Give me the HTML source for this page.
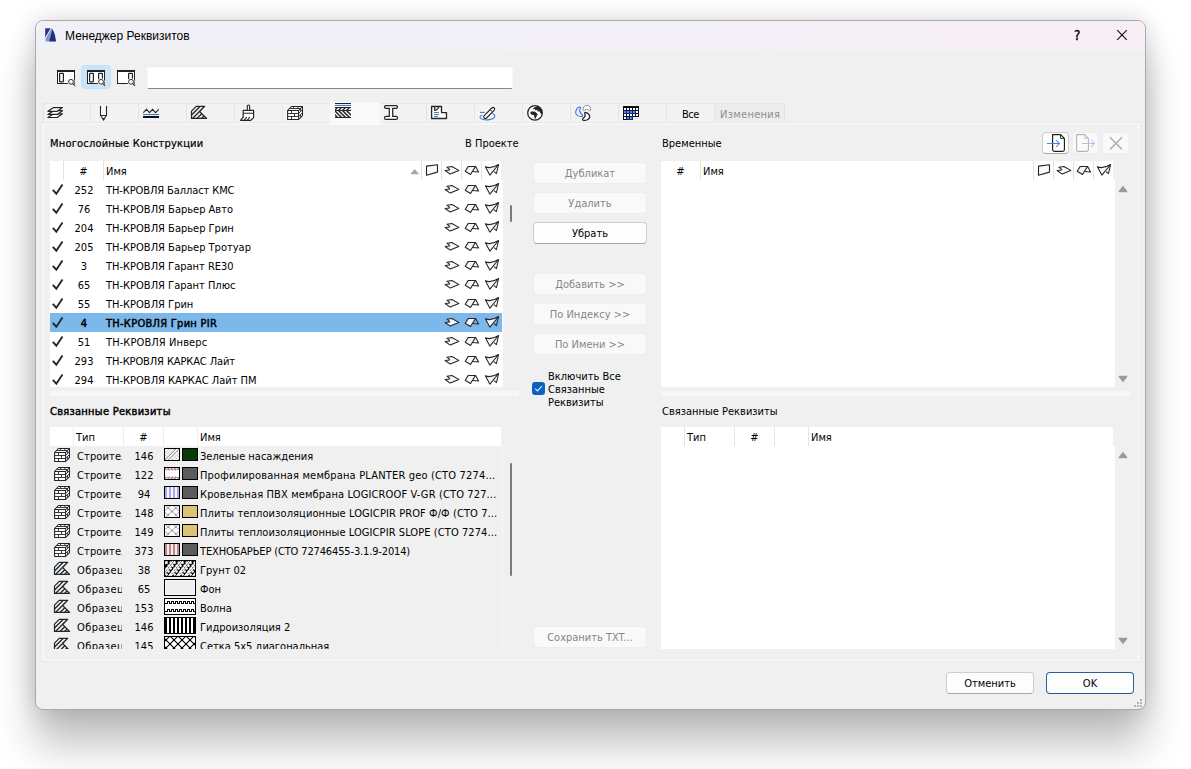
<!DOCTYPE html>
<html lang="ru">
<head>
<meta charset="utf-8">
<title>Менеджер Реквизитов</title>
<style>
*{box-sizing:border-box;margin:0;padding:0}
html,body{width:1191px;height:769px;overflow:hidden;background:#fff}
body{font-family:"DejaVu Sans Condensed","Liberation Sans",sans-serif;font-size:11px;color:#000;position:relative}
div,span,svg{position:absolute}
svg{overflow:visible}
#win{left:35px;top:20px;width:1111px;height:690px;border:1px solid #a9a9a9;border-radius:8px;background:#f0f0f0;box-shadow:0 36px 40px rgba(0,0,0,.24),0 0 24px rgba(0,0,0,.17);overflow:hidden}
#tb{left:0;top:0;width:1109px;height:30px;background:linear-gradient(90deg,#f1f0f7 0%,#f3f0f7 50%,#f8eff6 100%)}
#title{left:65px;top:29px;font-family:"Liberation Sans",sans-serif;font-size:12px;line-height:15px;white-space:nowrap}
.t{white-space:nowrap;line-height:13px;height:13px}
.b{letter-spacing:0.27px;-webkit-text-stroke:0.45px #000}
.c{text-align:center}
.w{background:#fff}
.btn{height:22px;border:1px solid #cdcdcd;border-bottom-color:#a8a8a8;border-radius:4px;background:#fdfdfd;text-align:center;line-height:22px;white-space:nowrap}
.dis{background:#f9f9f9;border-color:#ededed;color:#868686}
.def{border-color:#27629b;border-bottom-color:#245a90}
.sep{background:#e3e3e3;width:1px}
.sel{background:#7cb8e9}
</style>
</head>
<body>
<div id="win"><div id="tb"></div></div>
<div id="title">Менеджер Реквизитов</div>
<svg style="left:45px;top:27px" width="13" height="16" viewBox="0 0 13 16" ><path d="M0.2 1.2 H6 L0.2 11 Z" fill="#24388a"/><path d="M6.2 1.3 L7.6 2.2 L4.4 14.6 H0.6 V11.6 Z" fill="#8792d2"/><path d="M7.4 1.9 C9.4 5 10.6 10 11 14.6 H4.2 Z" fill="#1c2e7e"/><path d="M6.2 1.2 L0.3 11.4" stroke="#e4e9f8" stroke-width="0.9" fill="none"/></svg>
<div class="t" style="left:1074px;top:27px;font-size:13.5px;line-height:16px;height:16px;-webkit-text-stroke:0.35px #000">?</div>
<svg style="left:1117px;top:30px" width="10" height="10" viewBox="0 0 10 10" ><path d="M0.2 0.2 L9.8 9.8 M9.8 0.2 L0.2 9.8" stroke="#111" stroke-width="1.15" fill="none"/></svg>
<div style="left:81px;top:65px;width:30px;height:24px;background:#cce4f7;border:1px solid #c4e0f7;border-radius:4px"></div>
<svg style="left:57px;top:70px" width="19" height="17" viewBox="0 0 19 17" ><rect x="0.5" y="0.5" width="17" height="13" fill="#fff" stroke="#222" stroke-width="1"/><path d="M0 1 H18" stroke="#222" stroke-width="2"/><rect x="2.6" y="3.4" width="3.8" height="8.4" rx="0.5" fill="#fff" stroke="#222" stroke-width="1.2"/><circle cx="14" cy="11.8" r="3.6" fill="#f4f4f4" stroke="none"/><path d="M15.6 13.4 L18 15.8" stroke="#333" stroke-width="1.2"/><circle cx="14" cy="11.8" r="2.4" fill="#f8f8f8" stroke="#333" stroke-width="1"/></svg>
<svg style="left:87px;top:70px" width="19" height="17" viewBox="0 0 19 17" ><rect x="0.5" y="0.5" width="17" height="13" fill="#fff" stroke="#222" stroke-width="1"/><path d="M0 1 H18" stroke="#222" stroke-width="2"/><rect x="2.6" y="3.4" width="3.8" height="8.4" rx="0.5" fill="#fff" stroke="#222" stroke-width="1.2"/><rect x="11.6" y="3.4" width="3.8" height="8.4" rx="0.5" fill="#fff" stroke="#222" stroke-width="1.2"/><circle cx="14" cy="11.8" r="3.6" fill="#f4f4f4" stroke="none"/><path d="M15.6 13.4 L18 15.8" stroke="#333" stroke-width="1.2"/><circle cx="14" cy="11.8" r="2.4" fill="#f8f8f8" stroke="#333" stroke-width="1"/></svg>
<svg style="left:117px;top:70px" width="19" height="17" viewBox="0 0 19 17" ><rect x="0.5" y="0.5" width="17" height="13" fill="#fff" stroke="#222" stroke-width="1"/><path d="M0 1 H18" stroke="#222" stroke-width="2"/><rect x="11.6" y="3.4" width="3.8" height="8.4" rx="0.5" fill="#fff" stroke="#222" stroke-width="1.2"/><circle cx="14" cy="11.8" r="3.6" fill="#f4f4f4" stroke="none"/><path d="M15.6 13.4 L18 15.8" stroke="#333" stroke-width="1.2"/><circle cx="14" cy="11.8" r="2.4" fill="#f8f8f8" stroke="#333" stroke-width="1"/></svg>
<div style="left:147px;top:67px;width:366px;height:22px;background:#fff;border:1px solid #fafafa;border-bottom:1px solid #868686;border-radius:2px"></div>
<div style="left:43px;top:103px;width:742px;height:20px;background:#f3f3f3;border-top:1px solid #e6e6e6;border-bottom:1px solid #e6e6e6"></div>
<div style="left:43px;top:103px;width:1px;height:20px;background:#e4e4e4"></div>
<div style="left:90px;top:103px;width:1px;height:20px;background:#e4e4e4"></div>
<div style="left:138px;top:103px;width:1px;height:20px;background:#e4e4e4"></div>
<div style="left:186px;top:103px;width:1px;height:20px;background:#e4e4e4"></div>
<div style="left:234px;top:103px;width:1px;height:20px;background:#e4e4e4"></div>
<div style="left:282px;top:103px;width:1px;height:20px;background:#e4e4e4"></div>
<div style="left:330px;top:103px;width:1px;height:20px;background:#e4e4e4"></div>
<div style="left:378px;top:103px;width:1px;height:20px;background:#e4e4e4"></div>
<div style="left:426px;top:103px;width:1px;height:20px;background:#e4e4e4"></div>
<div style="left:474px;top:103px;width:1px;height:20px;background:#e4e4e4"></div>
<div style="left:522px;top:103px;width:1px;height:20px;background:#e4e4e4"></div>
<div style="left:570px;top:103px;width:1px;height:20px;background:#e4e4e4"></div>
<div style="left:618px;top:103px;width:1px;height:20px;background:#e4e4e4"></div>
<div style="left:666px;top:103px;width:1px;height:20px;background:#e4e4e4"></div>
<div style="left:715px;top:104px;width:69px;height:18px;background:#ededed"></div>
<div style="left:714px;top:103px;width:1px;height:20px;background:#e4e4e4"></div>
<div style="left:784px;top:103px;width:1px;height:20px;background:#e4e4e4"></div>
<div style="left:41px;top:122px;width:1100px;height:540px;border:1px solid #e8e8e8;background:#f0f0f0"></div>
<div style="left:42px;top:123px;width:1098px;height:538px;border:1px solid #f9f9f9;background:#f0f0f0"></div>
<div style="left:43px;top:124px;width:1096px;height:536px;border:1px solid #f5f5f5;border-top-color:#f3f3f3;border-bottom-color:#f3f3f3;background:#f0f0f0"></div>
<div style="left:44px;top:125px;width:1094px;height:534px;border:0 solid #f2f2f2;border-left-width:1px;border-right-width:1px;background:#f0f0f0"></div>
<div style="left:330px;top:102px;width:50px;height:23px;background:#f9f9f9"></div>
<svg style="left:47px;top:104px" width="16" height="17" viewBox="0 0 16 17" ><path d="M6.6 9.8 H15.5 L10.2 13.5 H0.9 Z" fill="#fff" stroke="#22262a" stroke-width="1.2" stroke-linejoin="round"/><path d="M6.6 6.7 H15.5 L10.2 10.4 H0.9 Z" fill="#fff" stroke="#22262a" stroke-width="1.2" stroke-linejoin="round"/><path d="M6.6 3.6 H15.5 L10.2 7.3 H0.9 Z" fill="#fff" stroke="#22262a" stroke-width="1.2" stroke-linejoin="round"/></svg>
<svg style="left:95px;top:104px" width="16" height="17" viewBox="0 0 16 17" ><path d="M5.5 2 V11.2 L8.5 16 L11.5 11.2 V2" fill="#f6f9fc" stroke="#22262a" stroke-width="1.1"/><path d="M5.5 11.5 H11.5" stroke="#22262a" stroke-width="1"/><path d="M7.6 14.3 L8.5 16 L9.5 14.3 Z" fill="#22262a" stroke="#22262a" stroke-width="0.6"/></svg>
<svg style="left:143px;top:104px" width="16" height="17" viewBox="0 0 16 17" ><path d="M0.3 8.6 L3.5 5.3 L6.5 8.6 L9.5 5.3 L12.5 8.6 L15.8 5.3" fill="none" stroke="#22262a" stroke-width="1.1"/><rect x="0" y="10" width="16" height="1" fill="#4a78c2"/><rect x="0" y="11" width="16" height="1" fill="#d8f0fa"/><rect x="0" y="12" width="16" height="2" fill="#0c131f"/></svg>
<svg style="left:191px;top:104px" width="16" height="17" viewBox="0 0 16 17" ><defs><clipPath id="cp1"><path d="M5.2 2.4 H13.7 L8.6 7.5 L15.6 14.4 H0.5 V7.1 Z"/></clipPath></defs><path d="M5.2 2.4 H13.7 L8.6 7.5 L15.6 14.4 H0.5 V7.1 Z" fill="#eef3f5" stroke="#22262a" stroke-width="1.2" stroke-linejoin="round"/><g clip-path="url(#cp1)"><path d="M-1 12.5 L10 1.5 M1 15 L14 2 M5.5 15 L11 9.5 M10 15 L13.5 11.5" fill="none" stroke="#22262a" stroke-width="1.35"/></g></svg>
<svg style="left:239px;top:104px" width="16" height="17" viewBox="0 0 16 17" ><path d="M8.3 6.3 V2.2 Q8.3 1 9.5 1 Q10.7 1 10.7 2.2 V6.3" fill="#fff" stroke="#22262a" stroke-width="1.1"/><path d="M4.2 6.3 H14.6 V13.6 L11.8 16.3 H1.6 L4.2 13.2 Z" fill="#fff" stroke="#22262a" stroke-width="1.2" stroke-linejoin="round"/><path d="M4.2 9.3 H14.6 M5.3 16.1 L7.7 13.2 M8.4 16.1 L10.8 13.2" fill="none" stroke="#22262a" stroke-width="1.1"/></svg>
<svg style="left:287px;top:104px" width="16" height="17" viewBox="0 0 16 17" ><path d="M0.6 6.5 L4.4 2.5 H15.5 V11.6 L11.6 15.5 H0.6 Z" fill="#fff" stroke="#22262a" stroke-width="1.05" stroke-linejoin="round"/><path d="M0.6 6.5 H11.6 V15.5 M11.6 6.5 L15.5 2.5" fill="none" stroke="#22262a" stroke-width="1.05"/><path d="M0.6 9.5 H11.6 M0.6 12.5 H11.6 M4.5 6.5 V9.5 M7.5 9.5 V12.5 M4.5 12.5 V15.5 M2.4 4.5 H13.6 M5.8 4.5 L7.4 2.5 M10.2 4.5 L11.6 2.5 M11.6 9.5 L15.5 5.5 M11.6 12.5 L15.5 8.5 M13.6 4.5 V7.5 M13.6 10.5 V13.5" fill="none" stroke="#22262a" stroke-width="0.9"/></svg>
<svg style="left:335px;top:102px" width="16" height="17" viewBox="0 0 16 17" ><defs><clipPath id="cp2a"><rect x="0" y="6" width="16" height="2"/></clipPath><clipPath id="cp2b"><rect x="0" y="9" width="16" height="6"/></clipPath></defs><rect x="0" y="0.5" width="16" height="16" fill="#fff"/><rect x="0" y="1" width="16" height="1" fill="#1a2440"/><rect x="0" y="2" width="16" height="1" fill="#d8f0fa"/><rect x="0" y="3" width="16" height="1" fill="#4a78c2"/><rect x="0" y="5" width="16" height="1" fill="#22262a"/><rect x="0" y="8" width="16" height="1" fill="#22262a"/><rect x="0" y="15" width="16" height="1" fill="#22262a"/><g clip-path="url(#cp2a)"><path d="M-1 9 L3 5 M3 9 L7 5 M7 9 L11 5 M11 9 L15 5 M15 9 L19 5" stroke="#22262a" stroke-width="1.4"/></g><g clip-path="url(#cp2b)"><path d="M-5 8 L4 17 M-1 8 L8 17 M3 8 L12 17 M7 8 L16 17 M11 8 L20 17" stroke="#22262a" stroke-width="1.5"/></g></svg>
<svg style="left:383px;top:104px" width="16" height="17" viewBox="0 0 16 17" ><path d="M3 1.6 H13 Q14.5 1.6 14.5 3 Q14.5 4.4 13 4.4 H9.7 V12.4 H13 Q14.5 12.4 14.5 13.9 Q14.5 15.4 13 15.4 H3 Q1.5 15.4 1.5 13.9 Q1.5 12.4 3 12.4 H6.3 V4.4 H3 Q1.5 4.4 1.5 3 Q1.5 1.6 3 1.6 Z" fill="#fff" stroke="#22262a" stroke-width="1.25"/></svg>
<svg style="left:431px;top:104px" width="16" height="17" viewBox="0 0 16 17" ><path d="M0.6 2.5 H10.5 V8.6 H15.5 V14.5 H0.6 Z" fill="#fff" stroke="#22262a" stroke-width="1.3" stroke-linejoin="round"/><path d="M3.7 2.5 V6.4 Q6.8 6.2 7.8 2.7" fill="none" stroke="#22262a" stroke-width="1.2"/><path d="M3.1 8.5 H7.9 M3.1 10.5 H7.9 M3.1 12.5 H7" stroke="#4a78c2" stroke-width="1"/></svg>
<svg style="left:479px;top:104px" width="16" height="17" viewBox="0 0 16 17" ><path d="M1.1 8.4 H5.6" stroke="#4a78c2" stroke-width="1.1" fill="none"/><path d="M3.2 11.2 C0.2 12 0.2 14.3 3.5 15.3 C7.5 16.5 14 15.7 15.6 13.2 C16.4 11.8 15.2 10.3 13.3 9.6" stroke="#4a78c2" stroke-width="1.1" fill="none"/><path d="M5.2 11.6 L12.8 4 Q14 2.9 15.2 4 Q16.3 5.2 15.1 6.4 L7.5 14 Q6.3 15 5.2 14 Q4.1 12.8 5.2 11.6 Z" fill="#fff" stroke="#22262a" stroke-width="1.2"/><path d="M11.2 5.6 L13.6 8" stroke="#22262a" stroke-width="1"/></svg>
<svg style="left:527px;top:104px" width="16" height="17" viewBox="0 0 16 17" ><circle cx="8" cy="8.9" r="7.3" fill="#fff" stroke="#22262a" stroke-width="1.3"/><path d="M3.2 8.9 L4 7.5 L7.5 7.4 L9 8.6 L10.8 10.4 L9.6 12 L8.5 14.7 L7.6 14.5 L7.1 11.2 L4.2 10.6 Z" fill="#22262a"/><path d="M7.1 3.4 L10 2.2 Q13.5 3 14.8 6.5 Q15.4 8.5 15 10.3 L13.4 9.2 L12.5 7.2 L10.6 7.6 L10.2 5.8 L8.4 6.4 L8 5 L5.6 5.6 Z" fill="#22262a"/></svg>
<svg style="left:575px;top:104px" width="16" height="17" viewBox="0 0 16 17" ><path d="M4.5 3.2 C1.5 4 0 7.5 1 10 C2.5 12.3 5 12.8 7.3 12.3 C8 12 7.5 11 6.5 10 C4.5 8.3 4 6.5 5.5 4.5 C6 3.5 5.3 3 4.5 3.2 Z" fill="#eaf5fd" stroke="#3f7fd6" stroke-width="1.2"/><path d="M8 6 C7.5 3 10 1.3 12 1.3 C14.5 1.3 16 3.5 15.8 6 C15.5 6.8 14.5 6.8 14 6.3 C12.5 5 10.5 5 9.5 6.3 C9 6.8 8.2 6.8 8 6 Z" fill="#fafafa" stroke="#909090" stroke-width="1"/><path d="M10.3 8.4 C12.5 8.6 15 11 14.8 13 C14.2 15.5 11 16.7 8.5 16.3 C7.3 16 7.3 15 8.2 14.3 C10 13 10.8 11.5 9.8 9.5 C9.5 8.8 9.8 8.4 10.3 8.4 Z" fill="#fff" stroke="#22262a" stroke-width="1.3"/></svg>
<svg style="left:623px;top:104px" width="16" height="17" viewBox="0 0 16 17" ><path d="M0 2 H16 V13 H10 V16 H0 Z" fill="#0d1117"/><rect x="0.5" y="6.5" width="12.5" height="3.5" fill="#0b2d80"/><rect x="3.5" y="12.5" width="6.5" height="3.5" fill="#0b2d80"/><rect x="1" y="4" width="2" height="2" fill="#fff"/><rect x="4" y="4" width="2" height="2" fill="#fff"/><rect x="7" y="4" width="2" height="2" fill="#fff"/><rect x="10" y="4" width="2" height="2" fill="#fff"/><rect x="13" y="4" width="2" height="2" fill="#fff"/><rect x="1" y="7" width="2" height="2" fill="#5a86d8"/><rect x="4" y="7" width="2" height="2" fill="#5a86d8"/><rect x="7" y="7" width="2" height="2" fill="#5a86d8"/><rect x="10" y="7" width="2" height="2" fill="#5a86d8"/><rect x="13" y="7" width="2" height="2" fill="#fff"/><rect x="1" y="10" width="2" height="2" fill="#fff"/><rect x="4" y="10" width="2" height="2" fill="#fff"/><rect x="7" y="10" width="2" height="2" fill="#fff"/><rect x="10" y="10" width="2" height="2" fill="#fff"/><rect x="13" y="10" width="2" height="2" fill="#fff"/><rect x="1" y="13" width="2" height="2" fill="#fff"/><rect x="4" y="13" width="2" height="2" fill="#5a86d8"/><rect x="7" y="13" width="2" height="2" fill="#5a86d8"/></svg>
<div class="t " style="left:682px;top:108px;letter-spacing:-0.5px">Все</div>
<div class="t " style="left:720px;top:108px;color:#8e8e8e;letter-spacing:0.3px">Изменения</div>
<div class="t " style="left:50px;top:137px;letter-spacing:0.2px;-webkit-text-stroke:0.22px #000">Многослойные Конструкции</div>
<div class="t " style="left:465px;top:137px;">В Проекте</div>
<div class="t " style="left:662px;top:137px;">Временные</div>
<div class="t b" style="left:50px;top:405px;">Связанные Реквизиты</div>
<div class="t " style="left:662px;top:405px;">Связанные Реквизиты</div>
<div class="btn" style="left:1042px;top:132px;width:27px;height:22px;"></div>
<div class="btn dis" style="left:1072px;top:132px;width:27px;height:22px;"></div>
<div class="btn dis" style="left:1102px;top:132px;width:27px;height:22px;"></div>
<svg style="left:1042px;top:132px" width="27" height="22" viewBox="0 0 27 22" ><path d="M10.6 2.6 H18.6 L22.4 6.4 V17.6 Q22.4 19.4 20.6 19.4 H12.4 Q10.6 19.4 10.6 17.6 Z" fill="#fff" stroke="#1d1d1d" stroke-width="1.15"/><path d="M18.6 2.6 V6.4 H22.4" fill="none" stroke="#1d1d1d" stroke-width="0.9"/><path d="M5 11.5 H17.5 M14 8 L17.5 11.5 L14 15" fill="none" stroke="#4a86d8" stroke-width="1.05"/></svg>
<svg style="left:1072px;top:132px" width="27" height="22" viewBox="0 0 27 22" ><path d="M4.6 2.6 H12.6 L16.4 6.4 V17.6 Q16.4 19.4 14.6 19.4 H6.4 Q4.6 19.4 4.6 17.6 Z" fill="#fbfbfb" stroke="#b4b4b4" stroke-width="1.1"/><path d="M12.6 2.6 V6.4 H16.4" fill="none" stroke="#c4c4c4" stroke-width="0.9"/><path d="M10 11.5 H22.5 M19 8 L22.5 11.5 L19 15" fill="none" stroke="#a9c6ef" stroke-width="1.05"/></svg>
<svg style="left:1102px;top:132px" width="27" height="22" viewBox="0 0 27 22" ><path d="M8 5.2 L20 17.4 M20 5.2 L8 17.4" fill="none" stroke="#b2b2b2" stroke-width="1.6"/></svg>
<div class="w" style="left:50px;top:161px;width:453px;height:226px;"></div>
<div style="left:501px;top:161px;width:2px;height:19px;background:#f0f0f0"></div>
<div class="sep" style="left:63px;top:161px;width:1px;height:19px;"></div>
<div class="sep" style="left:103px;top:161px;width:1px;height:19px;"></div>
<div class="sep" style="left:421px;top:161px;width:1px;height:19px;"></div>
<div class="sep" style="left:441px;top:161px;width:1px;height:19px;"></div>
<div class="sep" style="left:461px;top:161px;width:1px;height:19px;"></div>
<div class="sep" style="left:481px;top:161px;width:1px;height:19px;"></div>
<div class="t " style="left:64px;top:165px;width:39px;overflow:hidden;text-align:center;">#</div>
<div class="t " style="left:106px;top:165px;">Имя</div>
<svg style="left:410px;top:168px" width="10" height="7" viewBox="0 0 10 7" ><path d="M0.3 6.2 L4.7 1 L9.1 6.2 Z" fill="#a6a6a6"/></svg>
<svg style="left:422px;top:161px" width="20" height="19" viewBox="0 0 20 19" ><path d="M4.5 5.1 L15.5 3.8 L15.5 11.1 L4.5 14.3 Z" fill="#f6f8fb" stroke="#22262a" stroke-width="1.1" stroke-linejoin="round"/></svg>
<svg style="left:442px;top:161px" width="20" height="19" viewBox="0 0 20 19" ><path d="M4.9 6.2 L9.9 5.5 L16.8 9.4 L8.2 13.1 L3.1 9.5 L7.6 8.9 L6.6 7.4 Z" fill="#f6f8fb" stroke="#22262a" stroke-width="1.05" stroke-linejoin="round"/></svg>
<svg style="left:462px;top:161px" width="20" height="19" viewBox="0 0 20 19" ><path d="M6.3 5.4 L13.6 5.4 L8.5 13.5 L3.2 10.3 Z" fill="#f6f8fb" stroke="#22262a" stroke-width="1.05" stroke-linejoin="round"/><path d="M13.6 5.4 L16.6 11 L10.6 10.4" fill="none" stroke="#22262a" stroke-width="1.05" stroke-linejoin="round"/></svg>
<svg style="left:482px;top:161px" width="20" height="19" viewBox="0 0 20 19" ><path d="M3.4 5.8 Q9 8.2 16.6 3.5 L7.9 14.2 Z" fill="#f6f8fb" stroke="#22262a" stroke-width="1.05" stroke-linejoin="round"/><path d="M16.6 3.5 L14.4 12.6 L12 10.6" fill="none" stroke="#22262a" stroke-width="1.05" stroke-linejoin="round"/></svg>
<div style="left:50px;top:180px;width:453px;height:207px;overflow:hidden">
<svg style="left:0px;top:0px" width="14" height="19" viewBox="0 0 14 19" ><path d="M2.8 9.8 L6.3 13.7 L12.5 4.5" fill="none" stroke="#22262a" stroke-width="1.9"/></svg>
<div class="t c " style="left:14px;top:4px;width:40px">252</div><div class="t " style="left:56px;top:4px;letter-spacing:-0.1px">ТН-КРОВЛЯ Балласт КМС</div>
<svg style="left:392px;top:0px" width="20" height="19" viewBox="0 0 20 19" ><path d="M4.9 6.2 L9.9 5.5 L16.8 9.4 L8.2 13.1 L3.1 9.5 L7.6 8.9 L6.6 7.4 Z" fill="#f6f8fb" stroke="#22262a" stroke-width="1.05" stroke-linejoin="round"/></svg>
<svg style="left:412px;top:0px" width="20" height="19" viewBox="0 0 20 19" ><path d="M6.3 5.4 L13.6 5.4 L8.5 13.5 L3.2 10.3 Z" fill="#f6f8fb" stroke="#22262a" stroke-width="1.05" stroke-linejoin="round"/><path d="M13.6 5.4 L16.6 11 L10.6 10.4" fill="none" stroke="#22262a" stroke-width="1.05" stroke-linejoin="round"/></svg>
<svg style="left:432px;top:0px" width="20" height="19" viewBox="0 0 20 19" ><path d="M3.4 5.8 Q9 8.2 16.6 3.5 L7.9 14.2 Z" fill="#f6f8fb" stroke="#22262a" stroke-width="1.05" stroke-linejoin="round"/><path d="M16.6 3.5 L14.4 12.6 L12 10.6" fill="none" stroke="#22262a" stroke-width="1.05" stroke-linejoin="round"/></svg>
<svg style="left:0px;top:19px" width="14" height="19" viewBox="0 0 14 19" ><path d="M2.8 9.8 L6.3 13.7 L12.5 4.5" fill="none" stroke="#22262a" stroke-width="1.9"/></svg>
<div class="t c " style="left:14px;top:23px;width:40px">76</div><div class="t " style="left:56px;top:23px">ТН-КРОВЛЯ Барьер Авто</div>
<svg style="left:392px;top:19px" width="20" height="19" viewBox="0 0 20 19" ><path d="M4.9 6.2 L9.9 5.5 L16.8 9.4 L8.2 13.1 L3.1 9.5 L7.6 8.9 L6.6 7.4 Z" fill="#f6f8fb" stroke="#22262a" stroke-width="1.05" stroke-linejoin="round"/></svg>
<svg style="left:412px;top:19px" width="20" height="19" viewBox="0 0 20 19" ><path d="M6.3 5.4 L13.6 5.4 L8.5 13.5 L3.2 10.3 Z" fill="#f6f8fb" stroke="#22262a" stroke-width="1.05" stroke-linejoin="round"/><path d="M13.6 5.4 L16.6 11 L10.6 10.4" fill="none" stroke="#22262a" stroke-width="1.05" stroke-linejoin="round"/></svg>
<svg style="left:432px;top:19px" width="20" height="19" viewBox="0 0 20 19" ><path d="M3.4 5.8 Q9 8.2 16.6 3.5 L7.9 14.2 Z" fill="#f6f8fb" stroke="#22262a" stroke-width="1.05" stroke-linejoin="round"/><path d="M16.6 3.5 L14.4 12.6 L12 10.6" fill="none" stroke="#22262a" stroke-width="1.05" stroke-linejoin="round"/></svg>
<svg style="left:0px;top:38px" width="14" height="19" viewBox="0 0 14 19" ><path d="M2.8 9.8 L6.3 13.7 L12.5 4.5" fill="none" stroke="#22262a" stroke-width="1.9"/></svg>
<div class="t c " style="left:14px;top:42px;width:40px">204</div><div class="t " style="left:56px;top:42px">ТН-КРОВЛЯ Барьер Грин</div>
<svg style="left:392px;top:38px" width="20" height="19" viewBox="0 0 20 19" ><path d="M4.9 6.2 L9.9 5.5 L16.8 9.4 L8.2 13.1 L3.1 9.5 L7.6 8.9 L6.6 7.4 Z" fill="#f6f8fb" stroke="#22262a" stroke-width="1.05" stroke-linejoin="round"/></svg>
<svg style="left:412px;top:38px" width="20" height="19" viewBox="0 0 20 19" ><path d="M6.3 5.4 L13.6 5.4 L8.5 13.5 L3.2 10.3 Z" fill="#f6f8fb" stroke="#22262a" stroke-width="1.05" stroke-linejoin="round"/><path d="M13.6 5.4 L16.6 11 L10.6 10.4" fill="none" stroke="#22262a" stroke-width="1.05" stroke-linejoin="round"/></svg>
<svg style="left:432px;top:38px" width="20" height="19" viewBox="0 0 20 19" ><path d="M3.4 5.8 Q9 8.2 16.6 3.5 L7.9 14.2 Z" fill="#f6f8fb" stroke="#22262a" stroke-width="1.05" stroke-linejoin="round"/><path d="M16.6 3.5 L14.4 12.6 L12 10.6" fill="none" stroke="#22262a" stroke-width="1.05" stroke-linejoin="round"/></svg>
<svg style="left:0px;top:57px" width="14" height="19" viewBox="0 0 14 19" ><path d="M2.8 9.8 L6.3 13.7 L12.5 4.5" fill="none" stroke="#22262a" stroke-width="1.9"/></svg>
<div class="t c " style="left:14px;top:61px;width:40px">205</div><div class="t " style="left:56px;top:61px">ТН-КРОВЛЯ Барьер Тротуар</div>
<svg style="left:392px;top:57px" width="20" height="19" viewBox="0 0 20 19" ><path d="M4.9 6.2 L9.9 5.5 L16.8 9.4 L8.2 13.1 L3.1 9.5 L7.6 8.9 L6.6 7.4 Z" fill="#f6f8fb" stroke="#22262a" stroke-width="1.05" stroke-linejoin="round"/></svg>
<svg style="left:412px;top:57px" width="20" height="19" viewBox="0 0 20 19" ><path d="M6.3 5.4 L13.6 5.4 L8.5 13.5 L3.2 10.3 Z" fill="#f6f8fb" stroke="#22262a" stroke-width="1.05" stroke-linejoin="round"/><path d="M13.6 5.4 L16.6 11 L10.6 10.4" fill="none" stroke="#22262a" stroke-width="1.05" stroke-linejoin="round"/></svg>
<svg style="left:432px;top:57px" width="20" height="19" viewBox="0 0 20 19" ><path d="M3.4 5.8 Q9 8.2 16.6 3.5 L7.9 14.2 Z" fill="#f6f8fb" stroke="#22262a" stroke-width="1.05" stroke-linejoin="round"/><path d="M16.6 3.5 L14.4 12.6 L12 10.6" fill="none" stroke="#22262a" stroke-width="1.05" stroke-linejoin="round"/></svg>
<svg style="left:0px;top:76px" width="14" height="19" viewBox="0 0 14 19" ><path d="M2.8 9.8 L6.3 13.7 L12.5 4.5" fill="none" stroke="#22262a" stroke-width="1.9"/></svg>
<div class="t c " style="left:14px;top:80px;width:40px">3</div><div class="t " style="left:56px;top:80px">ТН-КРОВЛЯ Гарант RE30</div>
<svg style="left:392px;top:76px" width="20" height="19" viewBox="0 0 20 19" ><path d="M4.9 6.2 L9.9 5.5 L16.8 9.4 L8.2 13.1 L3.1 9.5 L7.6 8.9 L6.6 7.4 Z" fill="#f6f8fb" stroke="#22262a" stroke-width="1.05" stroke-linejoin="round"/></svg>
<svg style="left:412px;top:76px" width="20" height="19" viewBox="0 0 20 19" ><path d="M6.3 5.4 L13.6 5.4 L8.5 13.5 L3.2 10.3 Z" fill="#f6f8fb" stroke="#22262a" stroke-width="1.05" stroke-linejoin="round"/><path d="M13.6 5.4 L16.6 11 L10.6 10.4" fill="none" stroke="#22262a" stroke-width="1.05" stroke-linejoin="round"/></svg>
<svg style="left:432px;top:76px" width="20" height="19" viewBox="0 0 20 19" ><path d="M3.4 5.8 Q9 8.2 16.6 3.5 L7.9 14.2 Z" fill="#f6f8fb" stroke="#22262a" stroke-width="1.05" stroke-linejoin="round"/><path d="M16.6 3.5 L14.4 12.6 L12 10.6" fill="none" stroke="#22262a" stroke-width="1.05" stroke-linejoin="round"/></svg>
<svg style="left:0px;top:95px" width="14" height="19" viewBox="0 0 14 19" ><path d="M2.8 9.8 L6.3 13.7 L12.5 4.5" fill="none" stroke="#22262a" stroke-width="1.9"/></svg>
<div class="t c " style="left:14px;top:99px;width:40px">65</div><div class="t " style="left:56px;top:99px">ТН-КРОВЛЯ Гарант Плюс</div>
<svg style="left:392px;top:95px" width="20" height="19" viewBox="0 0 20 19" ><path d="M4.9 6.2 L9.9 5.5 L16.8 9.4 L8.2 13.1 L3.1 9.5 L7.6 8.9 L6.6 7.4 Z" fill="#f6f8fb" stroke="#22262a" stroke-width="1.05" stroke-linejoin="round"/></svg>
<svg style="left:412px;top:95px" width="20" height="19" viewBox="0 0 20 19" ><path d="M6.3 5.4 L13.6 5.4 L8.5 13.5 L3.2 10.3 Z" fill="#f6f8fb" stroke="#22262a" stroke-width="1.05" stroke-linejoin="round"/><path d="M13.6 5.4 L16.6 11 L10.6 10.4" fill="none" stroke="#22262a" stroke-width="1.05" stroke-linejoin="round"/></svg>
<svg style="left:432px;top:95px" width="20" height="19" viewBox="0 0 20 19" ><path d="M3.4 5.8 Q9 8.2 16.6 3.5 L7.9 14.2 Z" fill="#f6f8fb" stroke="#22262a" stroke-width="1.05" stroke-linejoin="round"/><path d="M16.6 3.5 L14.4 12.6 L12 10.6" fill="none" stroke="#22262a" stroke-width="1.05" stroke-linejoin="round"/></svg>
<svg style="left:0px;top:114px" width="14" height="19" viewBox="0 0 14 19" ><path d="M2.8 9.8 L6.3 13.7 L12.5 4.5" fill="none" stroke="#22262a" stroke-width="1.9"/></svg>
<div class="t c " style="left:14px;top:118px;width:40px">55</div><div class="t " style="left:56px;top:118px">ТН-КРОВЛЯ Грин</div>
<svg style="left:392px;top:114px" width="20" height="19" viewBox="0 0 20 19" ><path d="M4.9 6.2 L9.9 5.5 L16.8 9.4 L8.2 13.1 L3.1 9.5 L7.6 8.9 L6.6 7.4 Z" fill="#f6f8fb" stroke="#22262a" stroke-width="1.05" stroke-linejoin="round"/></svg>
<svg style="left:412px;top:114px" width="20" height="19" viewBox="0 0 20 19" ><path d="M6.3 5.4 L13.6 5.4 L8.5 13.5 L3.2 10.3 Z" fill="#f6f8fb" stroke="#22262a" stroke-width="1.05" stroke-linejoin="round"/><path d="M13.6 5.4 L16.6 11 L10.6 10.4" fill="none" stroke="#22262a" stroke-width="1.05" stroke-linejoin="round"/></svg>
<svg style="left:432px;top:114px" width="20" height="19" viewBox="0 0 20 19" ><path d="M3.4 5.8 Q9 8.2 16.6 3.5 L7.9 14.2 Z" fill="#f6f8fb" stroke="#22262a" stroke-width="1.05" stroke-linejoin="round"/><path d="M16.6 3.5 L14.4 12.6 L12 10.6" fill="none" stroke="#22262a" stroke-width="1.05" stroke-linejoin="round"/></svg>
<div class="sel" style="left:0;top:133px;width:452px;height:19px"></div>
<svg style="left:0px;top:133px" width="14" height="19" viewBox="0 0 14 19" ><path d="M2.8 9.8 L6.3 13.7 L12.5 4.5" fill="none" stroke="#22262a" stroke-width="1.9"/></svg>
<div class="t c b" style="left:14px;top:137px;width:40px">4</div><div class="t b" style="left:56px;top:137px">ТН-КРОВЛЯ Грин PIR</div>
<svg style="left:392px;top:133px" width="20" height="19" viewBox="0 0 20 19" ><path d="M4.9 6.2 L9.9 5.5 L16.8 9.4 L8.2 13.1 L3.1 9.5 L7.6 8.9 L6.6 7.4 Z" fill="#f6f8fb" stroke="#22262a" stroke-width="1.05" stroke-linejoin="round"/></svg>
<svg style="left:412px;top:133px" width="20" height="19" viewBox="0 0 20 19" ><path d="M6.3 5.4 L13.6 5.4 L8.5 13.5 L3.2 10.3 Z" fill="#f6f8fb" stroke="#22262a" stroke-width="1.05" stroke-linejoin="round"/><path d="M13.6 5.4 L16.6 11 L10.6 10.4" fill="none" stroke="#22262a" stroke-width="1.05" stroke-linejoin="round"/></svg>
<svg style="left:432px;top:133px" width="20" height="19" viewBox="0 0 20 19" ><path d="M3.4 5.8 Q9 8.2 16.6 3.5 L7.9 14.2 Z" fill="#f6f8fb" stroke="#22262a" stroke-width="1.05" stroke-linejoin="round"/><path d="M16.6 3.5 L14.4 12.6 L12 10.6" fill="none" stroke="#22262a" stroke-width="1.05" stroke-linejoin="round"/></svg>
<svg style="left:0px;top:152px" width="14" height="19" viewBox="0 0 14 19" ><path d="M2.8 9.8 L6.3 13.7 L12.5 4.5" fill="none" stroke="#22262a" stroke-width="1.9"/></svg>
<div class="t c " style="left:14px;top:156px;width:40px">51</div><div class="t " style="left:56px;top:156px;letter-spacing:0.1px">ТН-КРОВЛЯ Инверс</div>
<svg style="left:392px;top:152px" width="20" height="19" viewBox="0 0 20 19" ><path d="M4.9 6.2 L9.9 5.5 L16.8 9.4 L8.2 13.1 L3.1 9.5 L7.6 8.9 L6.6 7.4 Z" fill="#f6f8fb" stroke="#22262a" stroke-width="1.05" stroke-linejoin="round"/></svg>
<svg style="left:412px;top:152px" width="20" height="19" viewBox="0 0 20 19" ><path d="M6.3 5.4 L13.6 5.4 L8.5 13.5 L3.2 10.3 Z" fill="#f6f8fb" stroke="#22262a" stroke-width="1.05" stroke-linejoin="round"/><path d="M13.6 5.4 L16.6 11 L10.6 10.4" fill="none" stroke="#22262a" stroke-width="1.05" stroke-linejoin="round"/></svg>
<svg style="left:432px;top:152px" width="20" height="19" viewBox="0 0 20 19" ><path d="M3.4 5.8 Q9 8.2 16.6 3.5 L7.9 14.2 Z" fill="#f6f8fb" stroke="#22262a" stroke-width="1.05" stroke-linejoin="round"/><path d="M16.6 3.5 L14.4 12.6 L12 10.6" fill="none" stroke="#22262a" stroke-width="1.05" stroke-linejoin="round"/></svg>
<svg style="left:0px;top:171px" width="14" height="19" viewBox="0 0 14 19" ><path d="M2.8 9.8 L6.3 13.7 L12.5 4.5" fill="none" stroke="#22262a" stroke-width="1.9"/></svg>
<div class="t c " style="left:14px;top:175px;width:40px">293</div><div class="t " style="left:56px;top:175px;letter-spacing:-0.12px">ТН-КРОВЛЯ КАРКАС Лайт</div>
<svg style="left:392px;top:171px" width="20" height="19" viewBox="0 0 20 19" ><path d="M4.9 6.2 L9.9 5.5 L16.8 9.4 L8.2 13.1 L3.1 9.5 L7.6 8.9 L6.6 7.4 Z" fill="#f6f8fb" stroke="#22262a" stroke-width="1.05" stroke-linejoin="round"/></svg>
<svg style="left:412px;top:171px" width="20" height="19" viewBox="0 0 20 19" ><path d="M6.3 5.4 L13.6 5.4 L8.5 13.5 L3.2 10.3 Z" fill="#f6f8fb" stroke="#22262a" stroke-width="1.05" stroke-linejoin="round"/><path d="M13.6 5.4 L16.6 11 L10.6 10.4" fill="none" stroke="#22262a" stroke-width="1.05" stroke-linejoin="round"/></svg>
<svg style="left:432px;top:171px" width="20" height="19" viewBox="0 0 20 19" ><path d="M3.4 5.8 Q9 8.2 16.6 3.5 L7.9 14.2 Z" fill="#f6f8fb" stroke="#22262a" stroke-width="1.05" stroke-linejoin="round"/><path d="M16.6 3.5 L14.4 12.6 L12 10.6" fill="none" stroke="#22262a" stroke-width="1.05" stroke-linejoin="round"/></svg>
<svg style="left:0px;top:190px" width="14" height="19" viewBox="0 0 14 19" ><path d="M2.8 9.8 L6.3 13.7 L12.5 4.5" fill="none" stroke="#22262a" stroke-width="1.9"/></svg>
<div class="t c " style="left:14px;top:194px;width:40px">294</div><div class="t " style="left:56px;top:194px">ТН-КРОВЛЯ КАРКАС Лайт ПМ</div>
<svg style="left:392px;top:190px" width="20" height="19" viewBox="0 0 20 19" ><path d="M4.9 6.2 L9.9 5.5 L16.8 9.4 L8.2 13.1 L3.1 9.5 L7.6 8.9 L6.6 7.4 Z" fill="#f6f8fb" stroke="#22262a" stroke-width="1.05" stroke-linejoin="round"/></svg>
<svg style="left:412px;top:190px" width="20" height="19" viewBox="0 0 20 19" ><path d="M6.3 5.4 L13.6 5.4 L8.5 13.5 L3.2 10.3 Z" fill="#f6f8fb" stroke="#22262a" stroke-width="1.05" stroke-linejoin="round"/><path d="M13.6 5.4 L16.6 11 L10.6 10.4" fill="none" stroke="#22262a" stroke-width="1.05" stroke-linejoin="round"/></svg>
<svg style="left:432px;top:190px" width="20" height="19" viewBox="0 0 20 19" ><path d="M3.4 5.8 Q9 8.2 16.6 3.5 L7.9 14.2 Z" fill="#f6f8fb" stroke="#22262a" stroke-width="1.05" stroke-linejoin="round"/><path d="M16.6 3.5 L14.4 12.6 L12 10.6" fill="none" stroke="#22262a" stroke-width="1.05" stroke-linejoin="round"/></svg>
</div>
<div style="left:510px;top:205px;width:2px;height:17px;background:#7a7a7a;border-radius:1px"></div>
<div class="btn dis" style="left:533px;top:162px;width:114px">Дубликат</div>
<div class="btn dis" style="left:533px;top:192px;width:114px">Удалить</div>
<div class="btn " style="left:533px;top:222px;width:114px">Убрать</div>
<div class="btn dis" style="left:533px;top:273px;width:114px">Добавить &gt;&gt;</div>
<div class="btn dis" style="left:533px;top:303px;width:114px">По Индексу &gt;&gt;</div>
<div class="btn dis" style="left:533px;top:333px;width:114px">По Имени &gt;&gt;</div>
<div class="btn dis" style="left:533px;top:626px;width:114px">Сохранить TXT...</div>
<div style="left:532px;top:382px;width:13px;height:13px;background:#0b62c0;border-radius:3px"></div>
<svg style="left:532px;top:382px" width="13" height="13" viewBox="0 0 13 13" ><path d="M3.2 6.6 L5.5 8.9 L9.9 4.2" fill="none" stroke="#eaf2fb" stroke-width="1.05"/></svg>
<div class="t " style="left:548px;top:370px;">Включить Все</div>
<div class="t " style="left:548px;top:383px;">Связанные</div>
<div class="t " style="left:548px;top:396px;">Реквизиты</div>
<div style="left:50px;top:391px;width:469px;height:5px;background:#f7f7f7"></div>
<div style="left:661px;top:391px;width:470px;height:5px;background:#f7f7f7"></div>
<div class="w" style="left:661px;top:161px;width:454px;height:226px;"></div>
<div style="left:1113px;top:161px;width:2px;height:19px;background:#f0f0f0"></div>
<div class="sep" style="left:700px;top:161px;width:1px;height:19px;"></div>
<div class="sep" style="left:1033px;top:161px;width:1px;height:19px;"></div>
<div class="sep" style="left:1053px;top:161px;width:1px;height:19px;"></div>
<div class="sep" style="left:1073px;top:161px;width:1px;height:19px;"></div>
<div class="sep" style="left:1093px;top:161px;width:1px;height:19px;"></div>
<div class="t " style="left:661px;top:165px;width:39px;overflow:hidden;text-align:center;">#</div>
<div class="t " style="left:703px;top:165px;">Имя</div>
<svg style="left:1034px;top:161px" width="20" height="19" viewBox="0 0 20 19" ><path d="M4.5 5.1 L15.5 3.8 L15.5 11.1 L4.5 14.3 Z" fill="#f6f8fb" stroke="#22262a" stroke-width="1.1" stroke-linejoin="round"/></svg>
<svg style="left:1054px;top:161px" width="20" height="19" viewBox="0 0 20 19" ><path d="M4.9 6.2 L9.9 5.5 L16.8 9.4 L8.2 13.1 L3.1 9.5 L7.6 8.9 L6.6 7.4 Z" fill="#f6f8fb" stroke="#22262a" stroke-width="1.05" stroke-linejoin="round"/></svg>
<svg style="left:1074px;top:161px" width="20" height="19" viewBox="0 0 20 19" ><path d="M6.3 5.4 L13.6 5.4 L8.5 13.5 L3.2 10.3 Z" fill="#f6f8fb" stroke="#22262a" stroke-width="1.05" stroke-linejoin="round"/><path d="M13.6 5.4 L16.6 11 L10.6 10.4" fill="none" stroke="#22262a" stroke-width="1.05" stroke-linejoin="round"/></svg>
<svg style="left:1094px;top:161px" width="20" height="19" viewBox="0 0 20 19" ><path d="M3.4 5.8 Q9 8.2 16.6 3.5 L7.9 14.2 Z" fill="#f6f8fb" stroke="#22262a" stroke-width="1.05" stroke-linejoin="round"/><path d="M16.6 3.5 L14.4 12.6 L12 10.6" fill="none" stroke="#22262a" stroke-width="1.05" stroke-linejoin="round"/></svg>
<svg style="left:1118px;top:185px" width="10" height="8" viewBox="0 0 10 8" ><path d="M1.2 6.6 L5 1.5 L8.8 6.6 Z" fill="#9a9a9a" stroke="#9a9a9a" stroke-width="1.1" stroke-linejoin="round"/></svg>
<svg style="left:1118px;top:375px" width="10" height="8" viewBox="0 0 10 8" ><path d="M1.2 1.4 L5 6.5 L8.8 1.4 Z" fill="#9a9a9a" stroke="#9a9a9a" stroke-width="1.1" stroke-linejoin="round"/></svg>
<div class="w" style="left:50px;top:427px;width:451px;height:19px;"></div>
<div style="left:502px;top:446px;width:1px;height:203px;background:#f6f6f6"></div>
<div style="left:73px;top:427px;width:1px;height:19px;background:#ededed"></div>
<div style="left:123px;top:427px;width:1px;height:19px;background:#ededed"></div>
<div style="left:163px;top:427px;width:1px;height:19px;background:#ededed"></div>
<div style="left:197px;top:427px;width:1px;height:19px;background:#ededed"></div>
<div class="t " style="left:76px;top:431px;">Тип</div>
<div class="t " style="left:124px;top:431px;width:39px;overflow:hidden;text-align:center;">#</div>
<div class="t " style="left:200px;top:431px;">Имя</div>
<div style="left:50px;top:446px;width:453px;height:203px;overflow:hidden">
<svg style="left:4px;top:0px" width="16" height="17" viewBox="0 0 16 17" ><path d="M0.6 6.5 L4.4 2.5 H15.5 V11.6 L11.6 15.5 H0.6 Z" fill="#fff" stroke="#22262a" stroke-width="1.05" stroke-linejoin="round"/><path d="M0.6 6.5 H11.6 V15.5 M11.6 6.5 L15.5 2.5" fill="none" stroke="#22262a" stroke-width="1.05"/><path d="M0.6 9.5 H11.6 M0.6 12.5 H11.6 M4.5 6.5 V9.5 M7.5 9.5 V12.5 M4.5 12.5 V15.5 M2.4 4.5 H13.6 M5.8 4.5 L7.4 2.5 M10.2 4.5 L11.6 2.5 M11.6 9.5 L15.5 5.5 M11.6 12.5 L15.5 8.5 M13.6 4.5 V7.5 M13.6 10.5 V13.5" fill="none" stroke="#22262a" stroke-width="0.9"/></svg>
<div class="t" style="left:27px;top:4px;width:45px;overflow:hidden;letter-spacing:0.12px">Строител</div><div class="t c" style="left:74px;top:4px;width:40px">146</div><div class="t" style="left:150px;top:4px">Зеленые насаждения</div>
<svg style="left:114px;top:2px;overflow:hidden" width="16" height="13" viewBox="0 0 16 13"><defs><clipPath id="sc1"><rect x="1" y="1" width="14" height="11"/></clipPath></defs><rect x="0" y="0" width="16" height="13" fill="#000"/><rect x="1" y="1" width="14" height="11" fill="#fff"/><g clip-path="url(#sc1)"><path d="M-13.0 13 L0.0 0" stroke="#8a8a8a" stroke-width="0.9" stroke-dasharray="1.7 1.3" stroke-dashoffset="0.0"/><path d="M-10.1 13 L2.9 0" stroke="#8a8a8a" stroke-width="0.9" stroke-dasharray="1.7 1.3" stroke-dashoffset="1.5"/><path d="M-7.2 13 L5.8 0" stroke="#8a8a8a" stroke-width="0.9" stroke-dasharray="1.7 1.3" stroke-dashoffset="0.0"/><path d="M-4.3 13 L8.7 0" stroke="#8a8a8a" stroke-width="0.9" stroke-dasharray="1.7 1.3" stroke-dashoffset="1.5"/><path d="M-1.4 13 L11.6 0" stroke="#8a8a8a" stroke-width="0.9" stroke-dasharray="1.7 1.3" stroke-dashoffset="0.0"/><path d="M4.4 13 L17.4 0" stroke="#8a8a8a" stroke-width="0.9" stroke-dasharray="1.7 1.3" stroke-dashoffset="0.0"/><path d="M7.3 13 L20.3 0" stroke="#8a8a8a" stroke-width="0.9" stroke-dasharray="1.7 1.3" stroke-dashoffset="1.5"/><path d="M10.2 13 L23.2 0" stroke="#8a8a8a" stroke-width="0.9" stroke-dasharray="1.7 1.3" stroke-dashoffset="0.0"/><path d="M13.1 13 L26.1 0" stroke="#8a8a8a" stroke-width="0.9" stroke-dasharray="1.7 1.3" stroke-dashoffset="1.5"/><path d="M16.0 13 L29.0 0" stroke="#8a8a8a" stroke-width="0.9" stroke-dasharray="1.7 1.3" stroke-dashoffset="0.0"/><path d="M0.5 12.5 L12.5 0.5 M3.4 12.5 L15.4 0.5" stroke="#8a8a8a" stroke-width="0.9"/></g></svg>
<div style="left:132px;top:2px;width:16px;height:13px;background:#063a06;border:1px solid #000"></div>
<svg style="left:4px;top:19px" width="16" height="17" viewBox="0 0 16 17" ><path d="M0.6 6.5 L4.4 2.5 H15.5 V11.6 L11.6 15.5 H0.6 Z" fill="#fff" stroke="#22262a" stroke-width="1.05" stroke-linejoin="round"/><path d="M0.6 6.5 H11.6 V15.5 M11.6 6.5 L15.5 2.5" fill="none" stroke="#22262a" stroke-width="1.05"/><path d="M0.6 9.5 H11.6 M0.6 12.5 H11.6 M4.5 6.5 V9.5 M7.5 9.5 V12.5 M4.5 12.5 V15.5 M2.4 4.5 H13.6 M5.8 4.5 L7.4 2.5 M10.2 4.5 L11.6 2.5 M11.6 9.5 L15.5 5.5 M11.6 12.5 L15.5 8.5 M13.6 4.5 V7.5 M13.6 10.5 V13.5" fill="none" stroke="#22262a" stroke-width="0.9"/></svg>
<div class="t" style="left:27px;top:23px;width:45px;overflow:hidden;letter-spacing:0.12px">Строител</div><div class="t c" style="left:74px;top:23px;width:40px">122</div><div class="t" style="left:150px;top:23px;letter-spacing:0.17px">Профилированная мембрана PLANTER geo (СТО 7274...</div>
<svg style="left:114px;top:21px;overflow:hidden" width="16" height="13" viewBox="0 0 16 13"><defs><clipPath id="sc2"><rect x="1" y="1" width="14" height="11"/></clipPath></defs><rect x="0" y="0" width="16" height="13" fill="#000"/><rect x="1" y="1" width="14" height="11" fill="#fff"/><g clip-path="url(#sc2)"><rect x="1" y="1" width="14" height="2" fill="#b08890"/><rect x="1" y="10" width="14" height="2" fill="#b08890"/><rect x="2.0" y="1" width="1.3" height="1.3" fill="#fff"/><rect x="2.0" y="10.7" width="1.3" height="1.3" fill="#fff"/><rect x="1.4" y="3" width="1" height="1" fill="#c8a8ac"/><rect x="1.4" y="9" width="1" height="1" fill="#c8a8ac"/><rect x="5.3" y="1" width="1.3" height="1.3" fill="#fff"/><rect x="5.3" y="10.7" width="1.3" height="1.3" fill="#fff"/><rect x="4.7" y="3" width="1" height="1" fill="#c8a8ac"/><rect x="4.7" y="9" width="1" height="1" fill="#c8a8ac"/><rect x="8.6" y="1" width="1.3" height="1.3" fill="#fff"/><rect x="8.6" y="10.7" width="1.3" height="1.3" fill="#fff"/><rect x="8.0" y="3" width="1" height="1" fill="#c8a8ac"/><rect x="8.0" y="9" width="1" height="1" fill="#c8a8ac"/><rect x="11.9" y="1" width="1.3" height="1.3" fill="#fff"/><rect x="11.9" y="10.7" width="1.3" height="1.3" fill="#fff"/><rect x="11.3" y="3" width="1" height="1" fill="#c8a8ac"/><rect x="11.3" y="9" width="1" height="1" fill="#c8a8ac"/></g></svg>
<div style="left:132px;top:21px;width:16px;height:13px;background:#5c5c5c;border:1px solid #000"></div>
<svg style="left:4px;top:38px" width="16" height="17" viewBox="0 0 16 17" ><path d="M0.6 6.5 L4.4 2.5 H15.5 V11.6 L11.6 15.5 H0.6 Z" fill="#fff" stroke="#22262a" stroke-width="1.05" stroke-linejoin="round"/><path d="M0.6 6.5 H11.6 V15.5 M11.6 6.5 L15.5 2.5" fill="none" stroke="#22262a" stroke-width="1.05"/><path d="M0.6 9.5 H11.6 M0.6 12.5 H11.6 M4.5 6.5 V9.5 M7.5 9.5 V12.5 M4.5 12.5 V15.5 M2.4 4.5 H13.6 M5.8 4.5 L7.4 2.5 M10.2 4.5 L11.6 2.5 M11.6 9.5 L15.5 5.5 M11.6 12.5 L15.5 8.5 M13.6 4.5 V7.5 M13.6 10.5 V13.5" fill="none" stroke="#22262a" stroke-width="0.9"/></svg>
<div class="t" style="left:27px;top:42px;width:45px;overflow:hidden;letter-spacing:0.12px">Строител</div><div class="t c" style="left:74px;top:42px;width:40px">94</div><div class="t" style="left:150px;top:42px;letter-spacing:0.13px">Кровельная ПВХ мембрана LOGICROOF V-GR (СТО 727...</div>
<svg style="left:114px;top:40px;overflow:hidden" width="16" height="13" viewBox="0 0 16 13"><defs><clipPath id="sc3"><rect x="1" y="1" width="14" height="11"/></clipPath></defs><rect x="0" y="0" width="16" height="13" fill="#000"/><rect x="1" y="1" width="14" height="11" fill="#f4f4ff"/><g clip-path="url(#sc3)"><rect x="1" y="1" width="2" height="11" fill="#a9a9e6"/><rect x="5" y="1" width="2" height="11" fill="#a9a9e6"/><rect x="9" y="1" width="2" height="11" fill="#a9a9e6"/><rect x="13" y="1" width="2" height="11" fill="#a9a9e6"/></g></svg>
<div style="left:132px;top:40px;width:16px;height:13px;background:#5c5c5c;border:1px solid #000"></div>
<svg style="left:4px;top:57px" width="16" height="17" viewBox="0 0 16 17" ><path d="M0.6 6.5 L4.4 2.5 H15.5 V11.6 L11.6 15.5 H0.6 Z" fill="#fff" stroke="#22262a" stroke-width="1.05" stroke-linejoin="round"/><path d="M0.6 6.5 H11.6 V15.5 M11.6 6.5 L15.5 2.5" fill="none" stroke="#22262a" stroke-width="1.05"/><path d="M0.6 9.5 H11.6 M0.6 12.5 H11.6 M4.5 6.5 V9.5 M7.5 9.5 V12.5 M4.5 12.5 V15.5 M2.4 4.5 H13.6 M5.8 4.5 L7.4 2.5 M10.2 4.5 L11.6 2.5 M11.6 9.5 L15.5 5.5 M11.6 12.5 L15.5 8.5 M13.6 4.5 V7.5 M13.6 10.5 V13.5" fill="none" stroke="#22262a" stroke-width="0.9"/></svg>
<div class="t" style="left:27px;top:61px;width:45px;overflow:hidden;letter-spacing:0.12px">Строител</div><div class="t c" style="left:74px;top:61px;width:40px">148</div><div class="t" style="left:150px;top:61px;letter-spacing:0.09px">Плиты теплоизоляционные LOGICPIR PROF Ф/Ф (СТО 7...</div>
<svg style="left:114px;top:59px;overflow:hidden" width="16" height="13" viewBox="0 0 16 13"><defs><clipPath id="sc4"><rect x="1" y="1" width="14" height="11"/></clipPath></defs><rect x="0" y="0" width="16" height="13" fill="#000"/><rect x="1" y="1" width="14" height="11" fill="#fcfcfc"/><g clip-path="url(#sc4)"><path d="M1 0 L8 6.5 L1 13 M15 0 L8 6.5 L15 13 M0 6.5 L4.5 2.3 M0 6.5 L4.5 10.7 M16 6.5 L11.5 2.3 M16 6.5 L11.5 10.7 M4.5 2.3 L8 0 M11.5 2.3 L8 0" fill="none" stroke="#9c9c9c" stroke-width="0.9"/><circle cx="4.5" cy="3.3" r="0.8" fill="#8a8a8a"/><circle cx="11.5" cy="3.3" r="0.8" fill="#8a8a8a"/><circle cx="4.5" cy="9.8" r="0.8" fill="#8a8a8a"/><circle cx="11.5" cy="9.8" r="0.8" fill="#8a8a8a"/><circle cx="8" cy="6.5" r="0.8" fill="#8a8a8a"/></g></svg>
<div style="left:132px;top:59px;width:16px;height:13px;background:#dcc474;border:1px solid #000"></div>
<svg style="left:4px;top:76px" width="16" height="17" viewBox="0 0 16 17" ><path d="M0.6 6.5 L4.4 2.5 H15.5 V11.6 L11.6 15.5 H0.6 Z" fill="#fff" stroke="#22262a" stroke-width="1.05" stroke-linejoin="round"/><path d="M0.6 6.5 H11.6 V15.5 M11.6 6.5 L15.5 2.5" fill="none" stroke="#22262a" stroke-width="1.05"/><path d="M0.6 9.5 H11.6 M0.6 12.5 H11.6 M4.5 6.5 V9.5 M7.5 9.5 V12.5 M4.5 12.5 V15.5 M2.4 4.5 H13.6 M5.8 4.5 L7.4 2.5 M10.2 4.5 L11.6 2.5 M11.6 9.5 L15.5 5.5 M11.6 12.5 L15.5 8.5 M13.6 4.5 V7.5 M13.6 10.5 V13.5" fill="none" stroke="#22262a" stroke-width="0.9"/></svg>
<div class="t" style="left:27px;top:80px;width:45px;overflow:hidden;letter-spacing:0.12px">Строител</div><div class="t c" style="left:74px;top:80px;width:40px">149</div><div class="t" style="left:150px;top:80px;letter-spacing:0.08px">Плиты теплоизоляционные LOGICPIR SLOPE (СТО 7274...</div>
<svg style="left:114px;top:78px;overflow:hidden" width="16" height="13" viewBox="0 0 16 13"><defs><clipPath id="sc5"><rect x="1" y="1" width="14" height="11"/></clipPath></defs><rect x="0" y="0" width="16" height="13" fill="#000"/><rect x="1" y="1" width="14" height="11" fill="#fcfcfc"/><g clip-path="url(#sc5)"><path d="M1 0 L8 6.5 L1 13 M15 0 L8 6.5 L15 13 M0 6.5 L4.5 2.3 M0 6.5 L4.5 10.7 M16 6.5 L11.5 2.3 M16 6.5 L11.5 10.7 M4.5 2.3 L8 0 M11.5 2.3 L8 0" fill="none" stroke="#9c9c9c" stroke-width="0.9"/><circle cx="4.5" cy="3.3" r="0.8" fill="#8a8a8a"/><circle cx="11.5" cy="3.3" r="0.8" fill="#8a8a8a"/><circle cx="4.5" cy="9.8" r="0.8" fill="#8a8a8a"/><circle cx="11.5" cy="9.8" r="0.8" fill="#8a8a8a"/><circle cx="8" cy="6.5" r="0.8" fill="#8a8a8a"/></g></svg>
<div style="left:132px;top:78px;width:16px;height:13px;background:#dcc474;border:1px solid #000"></div>
<svg style="left:4px;top:95px" width="16" height="17" viewBox="0 0 16 17" ><path d="M0.6 6.5 L4.4 2.5 H15.5 V11.6 L11.6 15.5 H0.6 Z" fill="#fff" stroke="#22262a" stroke-width="1.05" stroke-linejoin="round"/><path d="M0.6 6.5 H11.6 V15.5 M11.6 6.5 L15.5 2.5" fill="none" stroke="#22262a" stroke-width="1.05"/><path d="M0.6 9.5 H11.6 M0.6 12.5 H11.6 M4.5 6.5 V9.5 M7.5 9.5 V12.5 M4.5 12.5 V15.5 M2.4 4.5 H13.6 M5.8 4.5 L7.4 2.5 M10.2 4.5 L11.6 2.5 M11.6 9.5 L15.5 5.5 M11.6 12.5 L15.5 8.5 M13.6 4.5 V7.5 M13.6 10.5 V13.5" fill="none" stroke="#22262a" stroke-width="0.9"/></svg>
<div class="t" style="left:27px;top:99px;width:45px;overflow:hidden;letter-spacing:0.12px">Строител</div><div class="t c" style="left:74px;top:99px;width:40px">373</div><div class="t" style="left:150px;top:99px;letter-spacing:-0.145px">ТЕХНОБАРЬЕР (СТО 72746455-3.1.9-2014)</div>
<svg style="left:114px;top:97px;overflow:hidden" width="16" height="13" viewBox="0 0 16 13"><defs><clipPath id="sc6"><rect x="1" y="1" width="14" height="11"/></clipPath></defs><rect x="0" y="0" width="16" height="13" fill="#000"/><rect x="1" y="1" width="14" height="11" fill="#ffe9e9"/><g clip-path="url(#sc6)"><rect x="1" y="1" width="2" height="11" fill="#b48c8c"/><rect x="5" y="1" width="2" height="11" fill="#b48c8c"/><rect x="9" y="1" width="2" height="11" fill="#b48c8c"/><rect x="13" y="1" width="2" height="11" fill="#b48c8c"/></g></svg>
<div style="left:132px;top:97px;width:16px;height:13px;background:#5c5c5c;border:1px solid #000"></div>
<svg style="left:4px;top:114px" width="16" height="17" viewBox="0 0 16 17" ><defs><clipPath id="cp3"><path d="M5.2 2.4 H13.7 L8.6 7.5 L15.6 14.4 H0.5 V7.1 Z"/></clipPath></defs><path d="M5.2 2.4 H13.7 L8.6 7.5 L15.6 14.4 H0.5 V7.1 Z" fill="#eef3f5" stroke="#22262a" stroke-width="1.2" stroke-linejoin="round"/><g clip-path="url(#cp3)"><path d="M-1 12.5 L10 1.5 M1 15 L14 2 M5.5 15 L11 9.5 M10 15 L13.5 11.5" fill="none" stroke="#22262a" stroke-width="1.35"/></g></svg>
<div class="t" style="left:27px;top:118px;width:45px;overflow:hidden;letter-spacing:0.4px">Образец</div><div class="t c" style="left:74px;top:118px;width:40px">38</div><div class="t" style="left:150px;top:118px">Грунт 02</div>
<svg style="left:114px;top:114px;overflow:hidden" width="32" height="17" viewBox="0 0 32 17"><defs><clipPath id="sc7"><rect x="1" y="1" width="30" height="15"/></clipPath></defs><rect x="0" y="0" width="32" height="17" fill="#000"/><rect x="1" y="1" width="30" height="15" fill="#000"/><g clip-path="url(#sc7)"><path d="M-20 17 L-6.4 0" stroke="#fff" stroke-width="1.3"/><path d="M-12 17 L1.6 0" stroke="#fff" stroke-width="1.3"/><path d="M-4 17 L9.6 0" stroke="#fff" stroke-width="1.3"/><path d="M4 17 L17.6 0" stroke="#fff" stroke-width="1.3"/><path d="M12 17 L25.6 0" stroke="#fff" stroke-width="1.3"/><path d="M20 17 L33.6 0" stroke="#fff" stroke-width="1.3"/><path d="M28 17 L41.6 0" stroke="#fff" stroke-width="1.3"/><path d="M36 17 L49.6 0" stroke="#fff" stroke-width="1.3"/><path d="M-17.8 17 L-4.2 0" stroke="#fff" stroke-width="1.1"/><path d="M-9.8 17 L3.8 0" stroke="#fff" stroke-width="1.1"/><path d="M-1.8000000000000007 17 L11.8 0" stroke="#fff" stroke-width="1.1"/><path d="M6.199999999999999 17 L19.8 0" stroke="#fff" stroke-width="1.1"/><path d="M14.2 17 L27.8 0" stroke="#fff" stroke-width="1.1"/><path d="M22.2 17 L35.8 0" stroke="#fff" stroke-width="1.1"/><path d="M30.2 17 L43.8 0" stroke="#fff" stroke-width="1.1"/><path d="M38.2 17 L51.8 0" stroke="#fff" stroke-width="1.1"/><circle cx="2.6" cy="2.8" r="1.25" fill="#fff"/><circle cx="6.6" cy="2.8" r="1.25" fill="#fff"/><circle cx="10.6" cy="2.8" r="1.25" fill="#fff"/><circle cx="14.6" cy="2.8" r="1.25" fill="#fff"/><circle cx="18.6" cy="2.8" r="1.25" fill="#fff"/><circle cx="22.6" cy="2.8" r="1.25" fill="#fff"/><circle cx="26.6" cy="2.8" r="1.25" fill="#fff"/><circle cx="30.6" cy="2.8" r="1.25" fill="#fff"/><circle cx="4.6" cy="5.7" r="1.25" fill="#fff"/><circle cx="8.6" cy="5.7" r="1.25" fill="#fff"/><circle cx="12.6" cy="5.7" r="1.25" fill="#fff"/><circle cx="16.6" cy="5.7" r="1.25" fill="#fff"/><circle cx="20.6" cy="5.7" r="1.25" fill="#fff"/><circle cx="24.6" cy="5.7" r="1.25" fill="#fff"/><circle cx="28.6" cy="5.7" r="1.25" fill="#fff"/><circle cx="32.6" cy="5.7" r="1.25" fill="#fff"/><circle cx="2.6" cy="8.6" r="1.25" fill="#fff"/><circle cx="6.6" cy="8.6" r="1.25" fill="#fff"/><circle cx="10.6" cy="8.6" r="1.25" fill="#fff"/><circle cx="14.6" cy="8.6" r="1.25" fill="#fff"/><circle cx="18.6" cy="8.6" r="1.25" fill="#fff"/><circle cx="22.6" cy="8.6" r="1.25" fill="#fff"/><circle cx="26.6" cy="8.6" r="1.25" fill="#fff"/><circle cx="30.6" cy="8.6" r="1.25" fill="#fff"/><circle cx="4.6" cy="11.5" r="1.25" fill="#fff"/><circle cx="8.6" cy="11.5" r="1.25" fill="#fff"/><circle cx="12.6" cy="11.5" r="1.25" fill="#fff"/><circle cx="16.6" cy="11.5" r="1.25" fill="#fff"/><circle cx="20.6" cy="11.5" r="1.25" fill="#fff"/><circle cx="24.6" cy="11.5" r="1.25" fill="#fff"/><circle cx="28.6" cy="11.5" r="1.25" fill="#fff"/><circle cx="32.6" cy="11.5" r="1.25" fill="#fff"/><circle cx="2.6" cy="14.4" r="1.25" fill="#fff"/><circle cx="6.6" cy="14.4" r="1.25" fill="#fff"/><circle cx="10.6" cy="14.4" r="1.25" fill="#fff"/><circle cx="14.6" cy="14.4" r="1.25" fill="#fff"/><circle cx="18.6" cy="14.4" r="1.25" fill="#fff"/><circle cx="22.6" cy="14.4" r="1.25" fill="#fff"/><circle cx="26.6" cy="14.4" r="1.25" fill="#fff"/><circle cx="30.6" cy="14.4" r="1.25" fill="#fff"/></g></svg>
<svg style="left:4px;top:133px" width="16" height="17" viewBox="0 0 16 17" ><defs><clipPath id="cp4"><path d="M5.2 2.4 H13.7 L8.6 7.5 L15.6 14.4 H0.5 V7.1 Z"/></clipPath></defs><path d="M5.2 2.4 H13.7 L8.6 7.5 L15.6 14.4 H0.5 V7.1 Z" fill="#eef3f5" stroke="#22262a" stroke-width="1.2" stroke-linejoin="round"/><g clip-path="url(#cp4)"><path d="M-1 12.5 L10 1.5 M1 15 L14 2 M5.5 15 L11 9.5 M10 15 L13.5 11.5" fill="none" stroke="#22262a" stroke-width="1.35"/></g></svg>
<div class="t" style="left:27px;top:137px;width:45px;overflow:hidden;letter-spacing:0.4px">Образец</div><div class="t c" style="left:74px;top:137px;width:40px">65</div><div class="t" style="left:150px;top:137px">Фон</div>
<svg style="left:114px;top:133px;overflow:hidden" width="32" height="17" viewBox="0 0 32 17"><defs><clipPath id="sc8"><rect x="1" y="1" width="30" height="15"/></clipPath></defs><rect x="0" y="0" width="32" height="17" fill="#000"/><rect x="1" y="1" width="30" height="15" fill="#eeeeee"/><g clip-path="url(#sc8)"><rect x="1.5" y="1.5" width="29" height="14" fill="none" stroke="#fafafa" stroke-width="1"/></g></svg>
<svg style="left:4px;top:152px" width="16" height="17" viewBox="0 0 16 17" ><defs><clipPath id="cp5"><path d="M5.2 2.4 H13.7 L8.6 7.5 L15.6 14.4 H0.5 V7.1 Z"/></clipPath></defs><path d="M5.2 2.4 H13.7 L8.6 7.5 L15.6 14.4 H0.5 V7.1 Z" fill="#eef3f5" stroke="#22262a" stroke-width="1.2" stroke-linejoin="round"/><g clip-path="url(#cp5)"><path d="M-1 12.5 L10 1.5 M1 15 L14 2 M5.5 15 L11 9.5 M10 15 L13.5 11.5" fill="none" stroke="#22262a" stroke-width="1.35"/></g></svg>
<div class="t" style="left:27px;top:156px;width:45px;overflow:hidden;letter-spacing:0.4px">Образец</div><div class="t c" style="left:74px;top:156px;width:40px">153</div><div class="t" style="left:150px;top:156px">Волна</div>
<svg style="left:114px;top:152px;overflow:hidden" width="32" height="17" viewBox="0 0 32 17"><defs><clipPath id="sc9"><rect x="1" y="1" width="30" height="15"/></clipPath></defs><rect x="0" y="0" width="32" height="17" fill="#000"/><rect x="1" y="1" width="30" height="15" fill="#fff"/><g clip-path="url(#sc9)"><path d="M0.5 5.5 H3.5 V3.5 H5.5 V5.5 H7.5 V3.5 H9.5 V5.5 H11.5 V3.5 H13.5 V5.5 H15.5 V3.5 H17.5 V5.5 H19.5 V3.5 H21.5 V5.5 H23.5 V3.5 H25.5 V5.5 H27.5 V3.5 H29.5 V5.5 H31.5 V3.5 H32" fill="none" stroke="#000" stroke-width="1" shape-rendering="crispEdges"/><path d="M0.5 13.5 H3.5 V11.5 H5.5 V13.5 H7.5 V11.5 H9.5 V13.5 H11.5 V11.5 H13.5 V13.5 H15.5 V11.5 H17.5 V13.5 H19.5 V11.5 H21.5 V13.5 H23.5 V11.5 H25.5 V13.5 H27.5 V11.5 H29.5 V13.5 H31.5 V11.5 H32" fill="none" stroke="#000" stroke-width="1" shape-rendering="crispEdges"/></g></svg>
<svg style="left:4px;top:171px" width="16" height="17" viewBox="0 0 16 17" ><defs><clipPath id="cp6"><path d="M5.2 2.4 H13.7 L8.6 7.5 L15.6 14.4 H0.5 V7.1 Z"/></clipPath></defs><path d="M5.2 2.4 H13.7 L8.6 7.5 L15.6 14.4 H0.5 V7.1 Z" fill="#eef3f5" stroke="#22262a" stroke-width="1.2" stroke-linejoin="round"/><g clip-path="url(#cp6)"><path d="M-1 12.5 L10 1.5 M1 15 L14 2 M5.5 15 L11 9.5 M10 15 L13.5 11.5" fill="none" stroke="#22262a" stroke-width="1.35"/></g></svg>
<div class="t" style="left:27px;top:175px;width:45px;overflow:hidden;letter-spacing:0.4px">Образец</div><div class="t c" style="left:74px;top:175px;width:40px">146</div><div class="t" style="left:150px;top:175px">Гидроизоляция 2</div>
<svg style="left:114px;top:171px;overflow:hidden" width="32" height="17" viewBox="0 0 32 17"><defs><clipPath id="sc10"><rect x="1" y="1" width="30" height="15"/></clipPath></defs><rect x="0" y="0" width="32" height="17" fill="#000"/><rect x="1" y="1" width="30" height="15" fill="#000"/><g clip-path="url(#sc10)"><rect x="3" y="1" width="2" height="15" fill="#fff"/><rect x="7" y="1" width="2" height="15" fill="#fff"/><rect x="11" y="1" width="2" height="15" fill="#fff"/><rect x="15" y="1" width="2" height="15" fill="#fff"/><rect x="19" y="1" width="2" height="15" fill="#fff"/><rect x="23" y="1" width="2" height="15" fill="#fff"/><rect x="27" y="1" width="2" height="15" fill="#fff"/></g></svg>
<svg style="left:4px;top:190px" width="16" height="17" viewBox="0 0 16 17" ><defs><clipPath id="cp7"><path d="M5.2 2.4 H13.7 L8.6 7.5 L15.6 14.4 H0.5 V7.1 Z"/></clipPath></defs><path d="M5.2 2.4 H13.7 L8.6 7.5 L15.6 14.4 H0.5 V7.1 Z" fill="#eef3f5" stroke="#22262a" stroke-width="1.2" stroke-linejoin="round"/><g clip-path="url(#cp7)"><path d="M-1 12.5 L10 1.5 M1 15 L14 2 M5.5 15 L11 9.5 M10 15 L13.5 11.5" fill="none" stroke="#22262a" stroke-width="1.35"/></g></svg>
<div class="t" style="left:27px;top:194px;width:45px;overflow:hidden;letter-spacing:0.4px">Образец</div><div class="t c" style="left:74px;top:194px;width:40px">145</div><div class="t" style="left:150px;top:194px">Сетка 5x5 диагональная</div>
<svg style="left:114px;top:190px;overflow:hidden" width="32" height="17" viewBox="0 0 32 17"><defs><clipPath id="sc11"><rect x="1" y="1" width="30" height="15"/></clipPath></defs><rect x="0" y="0" width="32" height="17" fill="#000"/><rect x="1" y="1" width="30" height="15" fill="#fff"/><g clip-path="url(#sc11)"><path d="M-26 0 L-9 17 M-2 0 L-19 17" stroke="#000" stroke-width="1.1"/><path d="M-18 0 L-1 17 M6 0 L-11 17" stroke="#000" stroke-width="1.1"/><path d="M-10 0 L7 17 M14 0 L-3 17" stroke="#000" stroke-width="1.1"/><path d="M-2 0 L15 17 M22 0 L5 17" stroke="#000" stroke-width="1.1"/><path d="M6 0 L23 17 M30 0 L13 17" stroke="#000" stroke-width="1.1"/><path d="M14 0 L31 17 M38 0 L21 17" stroke="#000" stroke-width="1.1"/><path d="M22 0 L39 17 M46 0 L29 17" stroke="#000" stroke-width="1.1"/><path d="M30 0 L47 17 M54 0 L37 17" stroke="#000" stroke-width="1.1"/><path d="M38 0 L55 17 M62 0 L45 17" stroke="#000" stroke-width="1.1"/><rect x="-3" y="7.2" width="1.6" height="1.6" fill="#000"/><rect x="1" y="3.2" width="1.6" height="1.6" fill="#000"/><rect x="1" y="11.2" width="1.6" height="1.6" fill="#000"/><rect x="5" y="7.2" width="1.6" height="1.6" fill="#000"/><rect x="9" y="3.2" width="1.6" height="1.6" fill="#000"/><rect x="9" y="11.2" width="1.6" height="1.6" fill="#000"/><rect x="13" y="7.2" width="1.6" height="1.6" fill="#000"/><rect x="17" y="3.2" width="1.6" height="1.6" fill="#000"/><rect x="17" y="11.2" width="1.6" height="1.6" fill="#000"/><rect x="21" y="7.2" width="1.6" height="1.6" fill="#000"/><rect x="25" y="3.2" width="1.6" height="1.6" fill="#000"/><rect x="25" y="11.2" width="1.6" height="1.6" fill="#000"/><rect x="29" y="7.2" width="1.6" height="1.6" fill="#000"/><rect x="33" y="3.2" width="1.6" height="1.6" fill="#000"/><rect x="33" y="11.2" width="1.6" height="1.6" fill="#000"/></g></svg>
</div>
<div style="left:510px;top:463px;width:2px;height:113px;background:#7a7a7a;border-radius:1px"></div>
<div class="w" style="left:661px;top:427px;width:454px;height:222px;"></div>
<div style="left:1113px;top:427px;width:2px;height:19px;background:#f0f0f0"></div>
<div class="sep" style="left:684px;top:427px;width:1px;height:19px;"></div>
<div class="sep" style="left:734px;top:427px;width:1px;height:19px;"></div>
<div class="sep" style="left:774px;top:427px;width:1px;height:19px;"></div>
<div class="sep" style="left:808px;top:427px;width:1px;height:19px;"></div>
<div class="t " style="left:687px;top:431px;">Тип</div>
<div class="t " style="left:735px;top:431px;width:39px;overflow:hidden;text-align:center;">#</div>
<div class="t " style="left:811px;top:431px;">Имя</div>
<svg style="left:1118px;top:451px" width="10" height="8" viewBox="0 0 10 8" ><path d="M1.2 6.6 L5 1.5 L8.8 6.6 Z" fill="#9a9a9a" stroke="#9a9a9a" stroke-width="1.1" stroke-linejoin="round"/></svg>
<svg style="left:1118px;top:637px" width="10" height="8" viewBox="0 0 10 8" ><path d="M1.2 1.4 L5 6.5 L8.8 1.4 Z" fill="#9a9a9a" stroke="#9a9a9a" stroke-width="1.1" stroke-linejoin="round"/></svg>
<div class="btn" style="left:946px;top:672px;width:88px">Отменить</div>
<div class="btn def" style="left:1046px;top:672px;width:88px">OK</div>
<svg style="left:1134px;top:699px" width="8" height="8" viewBox="0 0 8 8" ><rect x="6" y="0" width="2" height="2" fill="#b4b4b4"/><rect x="3" y="3" width="2" height="2" fill="#b4b4b4"/><rect x="6" y="3" width="2" height="2" fill="#b4b4b4"/><rect x="0" y="6" width="2" height="2" fill="#b4b4b4"/><rect x="3" y="6" width="2" height="2" fill="#b4b4b4"/><rect x="6" y="6" width="2" height="2" fill="#b4b4b4"/></svg>
</body>
</html>
